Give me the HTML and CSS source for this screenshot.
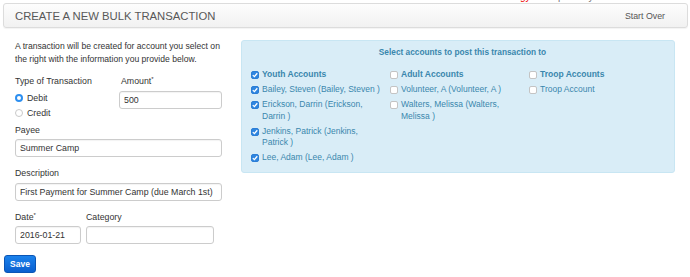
FILE: index.html
```html
<!DOCTYPE html>
<html lang="en">
<head>
    <meta charset="UTF-8">
    <title>Create a New Bulk Transaction</title>
    <link rel="stylesheet" href="styles.css">
</head>
<body>
    <div class="top-strip"><span class="alert-text">gy</span><span class="top-links">p &nbsp; &nbsp; &nbsp; &nbsp; y</span></div>

    <div class="page-header">
        <h1>CREATE A NEW BULK TRANSACTION</h1>
        <a href="#" class="start-over">Start Over</a>
    </div>

    <div class="content">
        <form class="left-col">
            <p class="intro">A transaction will be created for account you select on the right with the information you provide below.</p>

            <div class="row">
                <div class="field type-field">
                    <label>Type of Transaction</label>
                    <div class="radio"><span class="radio-dot checked"></span>Debit</div>
                    <div class="radio"><span class="radio-dot"></span>Credit</div>
                </div>
                <div class="field amount-field">
                    <label>Amount<sup>*</sup></label>
                    <input type="text" value="500">
                </div>
            </div>

            <div class="field">
                <label>Payee</label>
                <input type="text" value="Summer Camp">
            </div>

            <div class="field">
                <label>Description</label>
                <input type="text" value="First Payment for Summer Camp (due March 1st)">
            </div>

            <div class="row">
                <div class="field date-field">
                    <label>Date<sup>*</sup></label>
                    <input type="text" value="2016-01-21">
                </div>
                <div class="field category-field">
                    <label>Category</label>
                    <input type="text" value="">
                </div>
            </div>
        </form>

        <div class="accounts">
            <h2>Select accounts to post this transaction to</h2>
            <div class="account-cols">
                <ul class="account-list">
                    <li class="group"><span class="box checked"></span>Youth Accounts</li>
                    <li><span class="box checked"></span>Bailey, Steven (Bailey, Steven )</li>
                    <li><span class="box checked"></span>Erickson, Darrin (Erickson, Darrin )</li>
                    <li><span class="box checked"></span>Jenkins, Patrick (Jenkins, Patrick )</li>
                    <li><span class="box checked"></span>Lee, Adam (Lee, Adam )</li>
                </ul>
                <ul class="account-list">
                    <li class="group"><span class="box"></span>Adult Accounts</li>
                    <li><span class="box"></span>Volunteer, A (Volunteer, A )</li>
                    <li><span class="box"></span>Walters, Melissa (Walters, Melissa )</li>
                </ul>
                <ul class="account-list">
                    <li class="group"><span class="box"></span>Troop Accounts</li>
                    <li><span class="box"></span>Troop Account</li>
                </ul>
            </div>
        </div>
    </div>

    <button class="save-btn">Save</button>
</body>
</html>
```

FILE: styles.css
```css
:root {
    --text: #333;
    --border: #ccc;
    --info-bg: #d9edf7;
    --info-border: #c8e6f3;
    --info-text: #3a87ad;
}

body {
    font-family: "Liberation Sans", Arial, sans-serif;
    font-size: 8.8px;
    color: var(--text);
    margin: 0;
    background: #fff;
    overflow: hidden;
}

/* strip of the page above, cut off by the screenshot */
.top-strip {
    height: 3px;
    overflow: hidden;
    position: relative;
}

.alert-text {
    position: absolute;
    left: 520px;
    top: -9px;
    color: #e00;
    font-size: 10px;
}

.top-links {
    position: absolute;
    left: 558px;
    top: -9px;
    color: #777;
    font-size: 10px;
}

.page-header {
    display: flex;
    align-items: center;
    justify-content: space-between;
    margin: 0 2px 0 3px;
    height: 23px;
    padding: 0 22px 0 11px;
    border: 1px solid #dcdcdc;
    border-radius: 3px;
    background: linear-gradient(#fdfdfd, #f1f1f1);
    box-shadow: 0 1px 1px rgba(0, 0, 0, 0.05);
}

h1 {
    margin: 0;
    font-size: 11.3px;
    font-weight: normal;
    color: #585858;
}

.start-over {
    color: #555;
    text-decoration: none;
    font-size: 8.8px;
}

.content {
    display: flex;
    gap: 19px;
    padding: 12px 0 0 15px;
}

.left-col {
    width: 207px;
}

.intro {
    margin: 0 0 9px;
    line-height: 13px;
    font-size: 8.6px;
}

.row {
    display: flex;
    gap: 5px;
}

.field {
    margin-bottom: 10px;
}

.field label {
    display: block;
    height: 12px;
    line-height: 12px;
    margin-bottom: 3.5px;
}

sup {
    font-size: 6px;
    vertical-align: 3px;
    line-height: 0;
}

.field input {
    box-sizing: border-box;
    display: block;
    width: 100%;
    height: 18px;
    padding: 0 4px;
    border: 1px solid var(--border);
    border-radius: 3px;
    font-family: inherit;
    font-size: 8.8px;
    color: var(--text);
    box-shadow: inset 0 1px 1px rgba(0, 0, 0, 0.05);
}

.type-field {
    width: 99px;
    margin-bottom: 3px;
}

.amount-field {
    width: 103px;
    margin-bottom: 3px;
}

.amount-field label {
    padding-left: 2px;
}

.radio {
    display: flex;
    align-items: center;
    line-height: 15px;
}

.radio-dot {
    box-sizing: border-box;
    width: 8px;
    height: 8px;
    border-radius: 50%;
    border: 1px solid #c9c9c9;
    background: #fff;
    margin: 0 4px 0 0;
}

.radio-dot.checked {
    border: 2.5px solid #2d8ff0;
}

.date-field {
    width: 66px;
}

.category-field {
    width: 128px;
}

.accounts {
    box-sizing: border-box;
    width: 434px;
    height: 133px;
    padding: 5px 0 0 9px;
    background: var(--info-bg);
    border: 1px solid var(--info-border);
    border-radius: 3px;
    color: var(--info-text);
}

.accounts h2 {
    margin: 0 0 11px;
    text-align: center;
    font-size: 8.3px;
    font-weight: bold;
    line-height: 12px;
}

.account-cols {
    display: flex;
}

.account-list {
    list-style: none;
    margin: 0;
    padding: 0;
    width: 139px;
}

.account-list li {
    display: flex;
    align-items: flex-start;
    line-height: 11.5px;
    margin-bottom: 3.5px;
    padding-right: 6px;
    font-size: 8.5px;
}

.account-list li.group {
    font-weight: bold;
}

.box {
    flex: none;
    box-sizing: border-box;
    width: 8px;
    height: 8px;
    margin: 2px 3px 0 0;
    border: 1px solid #c4c4c4;
    border-radius: 2px;
    background: #fff;
}

.box.checked {
    border-color: #2c7ed6;
    background: #2f86e0 url("data:image/svg+xml;utf8,<svg xmlns='http://www.w3.org/2000/svg' viewBox='0 0 8 8'><path d='M1.8 4.1 3.4 5.6 6.3 2.3' fill='none' stroke='white' stroke-width='1.3'/></svg>") center / 8px 8px no-repeat;
}

.save-btn {
    display: block;
    margin: 1px 0 0 4px;
    width: 32px;
    height: 18px;
    padding: 0;
    border: 1px solid #0a55b5;
    border-radius: 3px;
    background: linear-gradient(#1b82ec, #0a5fcf);
    color: #fff;
    font-family: inherit;
    font-size: 8.5px;
    font-weight: bold;
}
```
